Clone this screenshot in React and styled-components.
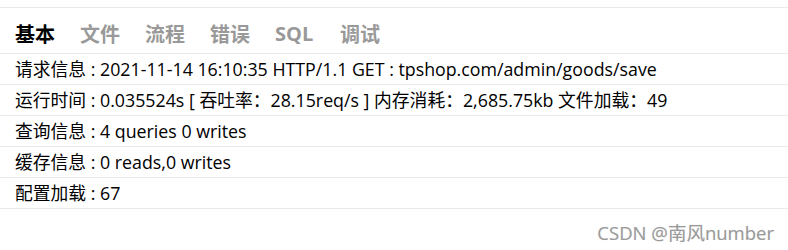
import React from "react";
import styled, { createGlobalStyle } from "styled-components";

const GlobalStyle = createGlobalStyle`
  html, body {
    margin: 0;
    padding: 0;
    background: #fff;
  }
  body {
    font-family: "Open Sans", "Noto Sans CJK SC", sans-serif;
  }
`;

const Page = styled.div`
  width: 788px;
  height: 250px;
  padding-top: 7px;
  box-sizing: border-box;
  position: relative;
  overflow: hidden;
`;

const Panel = styled.div`
  border-top: 1px solid #eaeaea;
`;

const TabBar = styled.div`
  display: flex;
  height: 46px;
  align-items: center;
  padding: 6px 0 0 15px;
  box-sizing: border-box;
  border-bottom: 1px solid #eaeaea;
`;

const Tab = styled.span`
  width: 65px;
  flex: none;
  font-size: 20px;
  font-weight: 700;
  color: ${props => (props.active ? "#000" : "#999")};
`;

const Row = styled.div`
  height: 31px;
  line-height: 30px;
  padding-left: 15px;
  box-sizing: border-box;
  border-bottom: 1px solid #eaeaea;
  font-size: 17.8px;
  color: #000;
  white-space: nowrap;
`;

const Watermark = styled.div`
  position: absolute;
  right: 14px;
  bottom: 5px;
  font-size: 18.5px;
  color: #9a9a9a;
  text-shadow: 0 0 1px rgba(0, 0, 0, 0.15);
`;

const tabs = ["基本", "文件", "流程", "错误", "SQL", "调试"];

const rows = [
  "请求信息 : 2021-11-14 16:10:35 HTTP/1.1 GET : tpshop.com/admin/goods/save",
  "运行时间 : 0.035524s [ 吞吐率：28.15req/s ] 内存消耗：2,685.75kb 文件加载：49",
  "查询信息 : 4 queries 0 writes",
  "缓存信息 : 0 reads,0 writes",
  "配置加载 : 67"
];

export default function App() {
  return (
    <Page>
      <GlobalStyle />
      <Panel>
        <TabBar>
          {tabs.map((t, i) => (
            <Tab key={t} active={i === 0}>
              {t}
            </Tab>
          ))}
        </TabBar>
        {rows.map(r => (
          <Row key={r}>{r}</Row>
        ))}
      </Panel>
      <Watermark>CSDN @南风number</Watermark>
    </Page>
  );
}
